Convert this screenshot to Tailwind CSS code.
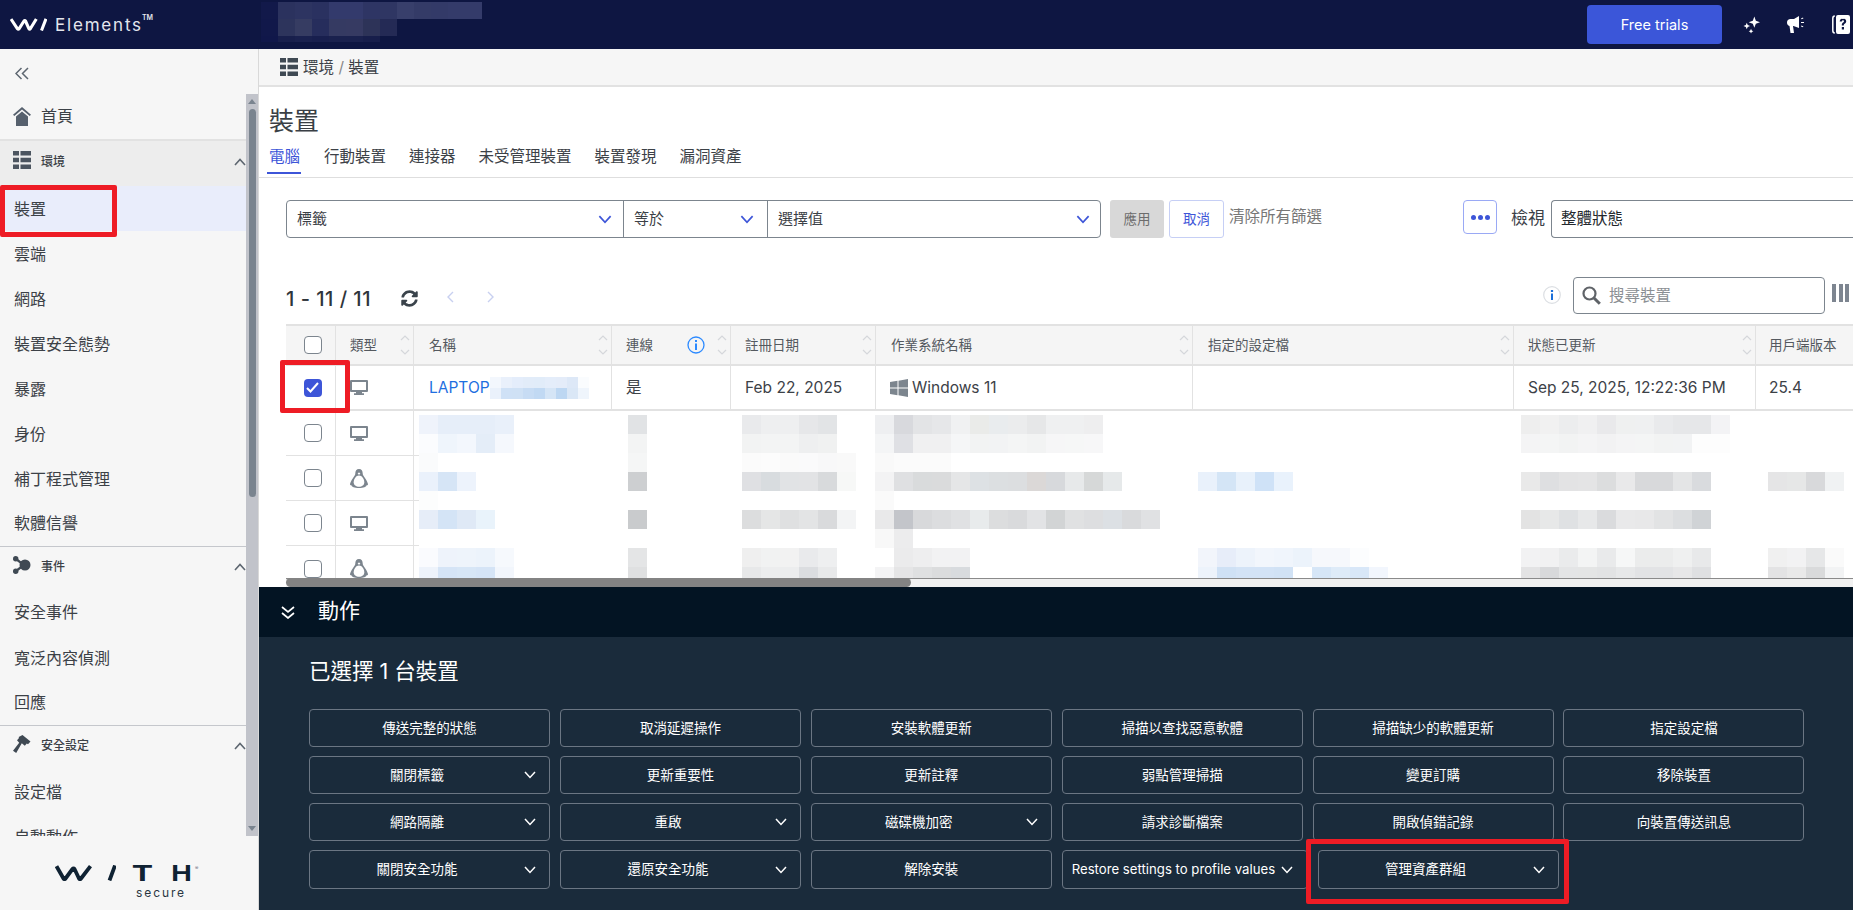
<!DOCTYPE html>
<html lang="zh-Hant">
<head>
<meta charset="utf-8" />
<title>WithSecure Elements - 裝置</title>
<script src="https://cdn.jsdelivr.net/npm/@tailwindcss/browser@4"></script>
</head>
<body class="font-[Inter,'Noto_Sans_CJK_TC',sans-serif] text-[#3c4147] bg-white overflow-hidden">

<!-- icon sprites -->
<svg class="hidden">
  <symbol id="i-list" viewBox="0 0 18 18"><path fill="currentColor" d="M0 0h6v4.500H0zM7.500 0H18v4.500H7.500zM0 6.700h6v4.500H0zM7.500 6.700H18v4.500H7.500zM0 13.400h6v4.500H0zM7.500 13.400H18v4.500H7.500z"/></symbol>
  <symbol id="i-sort" viewBox="0 0 10 20"><path fill="none" stroke="#d5d7db" stroke-width="1.200" d="M1 5l4-4 4 4M1 15l4 4 4-4"/></symbol>
  <symbol id="i-pc" viewBox="0 0 18 15"><path fill="currentColor" fill-rule="evenodd" d="M1 0h16a1 1 0 0 1 1 1v10a1 1 0 0 1-1 1H1a1 1 0 0 1-1-1V1a1 1 0 0 1 1-1zm1 2v8h14V2zM6 12h6v1.200h2V15H4v-1.800h2z"/></symbol>
  <symbol id="i-tux" viewBox="0 0 18 19"><path fill="currentColor" d="M9 0c2.600 0 3.700 2 3.700 4.400 0 1.700 1.200 2.900 2.600 5 1.300 2 2.700 4.400 2.700 5.900 0 .8-.7 1.100-1.300.7-.2 1.800-3.200 3-7.700 3s-7.500-1.200-7.700-3c-.6.4-1.300.1-1.300-.7 0-1.500 1.400-3.900 2.700-5.900 1.400-2.100 2.600-3.300 2.600-5C5.300 2 6.400 0 9 0z"/><path fill="#fff" d="M9 6.500c3 0 5.300 3.500 5.300 6.700 0 2.800-2.300 4.500-5.300 4.500s-5.300-1.700-5.300-4.500C3.700 10 6 6.500 9 6.500z"/><path fill="#fff" d="M7.600 4.200 9 6l1.400-1.800-1.400-.6z"/></symbol>
  <symbol id="i-chev" viewBox="0 0 12 8"><path fill="none" stroke="currentColor" stroke-width="1.500" d="M1 1l5 5.500L11 1"/></symbol>
  <symbol id="i-up" viewBox="0 0 12 8"><path fill="none" stroke="currentColor" stroke-width="1.600" d="M1 7l5-5.500L11 7"/></symbol>
</svg>

<div class="flex flex-col w-[1853px] h-[910px]">

  <!-- top bar -->
  <header class="flex items-center h-[49px] shrink-0 bg-[#0e1642] text-white">
    <div class="w-[261px] flex items-center pl-[10px] gap-[8px]">
      <svg class="w-[37px] h-[13px]" viewBox="0 0 37 13"><path fill="none" stroke="#fff" stroke-width="3.100" stroke-linejoin="round" d="M1 1l6.500 9.800q.8 1 1.500 0L14 3q.8-1 1.500 0l3.500 7.800q.6 1 1.300 0L26.300 1M36 .8L31.500 12.500"/></svg>
      <span class="text-[17px] leading-[20px] tracking-[1.800px] text-[#e4e6ee]">Elements<sup class="text-[7px] tracking-normal align-[7px] -ml-[1px] font-semibold">TM</sup></span>
    </div>
    <div id="head-blur" class="grid grid-cols-[repeat(13,17px)] auto-rows-[17px] h-[40px] overflow-hidden self-start mt-[2px]"></div>
    <a class="ml-auto w-[135px] h-[39px] flex items-center justify-center rounded-[4px] bg-[#3b56d9] text-[14.500px]">Free trials</a>
    <svg class="w-[17px] h-[18px] ml-[21px]" viewBox="0 0 18 18"><path fill="#fff" d="M12 0l1.600 4.400L18 6l-4.400 1.600L12 12l-1.600-4.400L6 6l4.400-1.600zM4 6.500l1 2.500 2.500 1-2.500 1-1 2.500-1-2.500L.5 10l2.500-1zM8.500 13l.8 1.800 1.700.7-1.700.8-.8 1.700-.8-1.700-1.700-.8 1.700-.7z"/></svg>
    <svg class="w-[18px] h-[19px] ml-[27px]" viewBox="0 0 18 19"><path fill="#fff" d="M12 1v12L6.500 11H6l1 7H3.500L2.500 11C.9 10.500 0 9.300 0 7.500 0 5.500 1.400 4 3.500 4H7zM14 3.400l2-.8.4.9-2 .8zM14 7h3v1h-3zM14 11.500l.4-.9 2 .8-.4.9z"/></svg>
    <svg class="w-[18px] h-[19px] ml-[27px] mr-[3px]" viewBox="0 0 18 19"><path fill="none" stroke="#fff" stroke-width="1.500" d="M2.800 1Q.8 1 .8 3.500v12q0 2.500 2 2.500"/><path fill="#fff" fill-rule="evenodd" d="M6 0h10a2 2 0 0 1 2 2v15a2 2 0 0 1-2 2H6a2 2 0 0 1-2-2V2a2 2 0 0 1 2-2zm5 3.500C9.100 3.500 7.800 4.600 7.700 6.400h2.100c.1-.7.500-1.100 1.100-1.100.6 0 1.100.4 1.100 1 0 .5-.3.8-.9 1.300-1 .7-1.300 1.400-1.300 2.800h2c0-.8.200-1.200.9-1.700.9-.6 1.500-1.400 1.500-2.500 0-1.800-1.400-2.700-3.300-2.700zM9.800 12v2.400H12V12z"/></svg>
  </header>

  <div class="flex flex-1 min-h-0">

    <!-- sidebar -->
    <aside class="w-[259px] shrink-0 flex flex-col bg-[#f6f6f6] border-r border-[#d9d9d9] relative">
      <div class="h-[45px] shrink-0 flex items-center pl-[15px] pt-[4px] text-[#5d6670]">
        <svg class="w-[14px] h-[13px]" viewBox="0 0 14 13"><path fill="none" stroke="currentColor" stroke-width="1.500" d="M6.500 1L1 6.500 6.500 12M13 1L7.500 6.500 13 12"/></svg>
      </div>
      <div class="flex h-[742px] shrink-0">
        <nav class="w-[246px] overflow-hidden text-[16px]">
          <div class="h-[47px] flex items-center pl-[13px] gap-[10px] border-b-2 border-[#e2e2e2]">
            <svg class="w-[18px] h-[19px] text-[#56606d]" viewBox="0 0 18 19"><path fill="currentColor" d="M9 0l9 7.800-1.300 1.300L9 2.500 1.300 9.100 0 7.800zM9 4.500l6 5V19H3V9.500z"/></svg>
            <span class="pb-[2px]">首頁</span>
          </div>
          <div class="h-[45px] flex items-start pt-[10px] pl-[13px] gap-[10px] bg-[#ededed] text-[12px] font-medium">
            <svg class="w-[18px] h-[18px] text-[#4c5560]"><use href="#i-list"/></svg>
            <span class="flex-1 leading-[22px]">環境</span>
            <svg class="w-[12px] h-[8px] mt-[7px] text-[#5d6670]"><use href="#i-up"/></svg>
          </div>
          <div class="h-[45px] flex items-center pl-[14px] bg-[#e9edfb]">裝置</div>
          <div class="h-[45px] flex items-center pl-[14px]">雲端</div>
          <div class="h-[45px] flex items-center pl-[14px]">網路</div>
          <div class="h-[45px] flex items-center pl-[14px]">裝置安全態勢</div>
          <div class="h-[45px] flex items-center pl-[14px]">暴露</div>
          <div class="h-[45px] flex items-center pl-[14px]">身份</div>
          <div class="h-[45px] flex items-center pl-[14px]">補丁程式管理</div>
          <div class="h-[45px] flex items-center pl-[14px] pb-[1px]">軟體信譽</div>
          <div class="h-[44px] flex items-start pt-[9px] pl-[13px] gap-[10px] border-t border-[#c5c7cc] text-[12px] font-medium">
            <svg class="w-[18px] h-[18px] text-[#3f4953]" viewBox="0 0 18 18"><path fill="none" stroke="currentColor" stroke-width="2.200" d="M3 3l8 6-8 6"/><circle cx="12" cy="9" r="5.500" fill="currentColor"/><circle cx="2.700" cy="2.700" r="2.700" fill="currentColor"/><circle cx="2.700" cy="15.300" r="2.700" fill="currentColor"/></svg>
            <span class="flex-1 leading-[22px]">事件</span>
            <svg class="w-[12px] h-[8px] mt-[7px] text-[#5d6670]"><use href="#i-up"/></svg>
          </div>
          <div class="h-[45px] flex items-center pl-[14px] pb-[1px]">安全事件</div>
          <div class="h-[45px] flex items-center pl-[14px]">寬泛內容偵測</div>
          <div class="h-[45px] flex items-center pl-[14px] pb-[1px]">回應</div>
          <div class="h-[44px] flex items-start pt-[9px] pl-[13px] gap-[10px] border-t border-[#c5c7cc] text-[12px] font-medium">
            <svg class="w-[18px] h-[18px] text-[#3f4953]" viewBox="0 0 18 18"><path fill="currentColor" d="M9.500 0l8 6.500-2.500 2.700-1.200-.8-2 2.300-3-2.500L3.200 18 0 15.800l6.200-8L4 5.300l2-2.200L5.700 2z"/></svg>
            <span class="flex-1 leading-[22px]">安全設定</span>
            <svg class="w-[12px] h-[8px] mt-[7px] text-[#5d6670]"><use href="#i-up"/></svg>
          </div>
          <div class="h-[45px] flex items-center pl-[14px]">設定檔</div>
          <div class="h-[45px] flex items-center pl-[14px]">自動動作</div>
        </nav>
        <!-- scrollbar -->
        <div class="w-[12px] bg-[#c1c3ca] flex flex-col items-center">
          <div class="mt-[5px] w-0 h-0 border-x-[4px] border-x-transparent border-b-[5px] border-b-[#7a848f]"></div>
          <div class="mt-[5px] w-[7px] h-[388px] rounded-[4px] bg-[#7a848f]"></div>
          <div class="mt-auto mb-[5px] w-0 h-0 border-x-[4px] border-x-transparent border-t-[5px] border-t-[#7a848f]"></div>
        </div>
      </div>
      <!-- WithSecure logo -->
      <div class="flex-1 pl-[55px] pt-[29px] text-[#0f2233]">
        <div class="flex items-start h-[16px] w-[148px]">
          <svg class="w-[61px] h-[16px] shrink-0" viewBox="0 0 61 16"><path fill="none" stroke="currentColor" stroke-width="3.800" stroke-linejoin="round" d="M1.500 1.200l7 12.300q1 1.300 2 0L17.500 4q1-1.300 2 0l4.500 9.500q1 1.300 2 0L35.500 1.200M60 .5L54.500 15.500"/></svg>
          <span class="ml-[16px] w-[21px] text-center text-[22px] leading-[16px] font-bold scale-x-[1.450] inline-block">T</span>
          <span class="ml-[18px] w-[21px] text-center text-[22px] leading-[16px] font-bold scale-x-[1.250] inline-block">H</span>
          <span class="ml-[3px] text-[5px] leading-[6px] text-[#667]">®</span>
        </div>
        <div class="pl-[81px] mt-[5px] text-[12px] leading-[13px] tracking-[1.900px] text-[#2a3642]">secure</div>
      </div>
      <!-- red annotation -->
      <div class="absolute left-0 top-[136px] w-[117px] h-[52px] border-[5px] border-[#ee1c25] rounded-[2px]"></div>
    </aside>

    <!-- main -->
    <main class="flex-1 min-w-0 flex flex-col">
      <div class="h-[38px] shrink-0 flex items-center pl-[21px] gap-[5px] bg-[#f6f6f6] border-b-2 border-[#e2e2e2] text-[15.500px]">
        <svg class="w-[18px] h-[18px] text-[#3f4953]"><use href="#i-list"/></svg>
        <span class="pt-[1px]">環境 <span class="text-[#888]">/</span> 裝置</span>
      </div>

      <div class="h-[91px] shrink-0 border-b border-[#dedede] pl-[10px] flex flex-col">
        <h1 class="text-[25px] leading-[34px] mt-[17px] text-[#3a3f45]">裝置</h1>
        <div class="flex gap-[23px] text-[15.500px] leading-[22px] mt-[3px] -ml-[1px]">
          <span class="relative h-[37px] pt-[5px] px-[1px] text-[#3d55d8]">電腦<i class="absolute left-[-1px] right-0 bottom-[4px] h-[2px] bg-[#3d55d8]"></i></span>
          <span class="pt-[5px]">行動裝置</span>
          <span class="pt-[5px]">連接器</span>
          <span class="pt-[5px]">未受管理裝置</span>
          <span class="pt-[5px]">裝置發現</span>
          <span class="pt-[5px]">漏洞資產</span>
        </div>
      </div>

      <!-- filters -->
      <div class="flex items-start h-[38px] mt-[22px] shrink-0 pl-[27px] text-[15px]">
        <div class="flex w-[815px] h-[38px] border border-[#7c858e] rounded-[4px]">
          <div class="w-[337px] flex items-center justify-between pl-[10px] pr-[11px] border-r border-[#7c858e]">標籤<svg class="w-[14px] h-[9px] text-[#3d55d8]"><use href="#i-chev"/></svg></div>
          <div class="w-[144px] flex items-center justify-between pl-[10px] pr-[13px] border-r border-[#7c858e]">等於<svg class="w-[14px] h-[9px] text-[#3d55d8]"><use href="#i-chev"/></svg></div>
          <div class="flex-1 flex items-center justify-between pl-[10px] pr-[10px]">選擇值<svg class="w-[14px] h-[9px] text-[#3d55d8]"><use href="#i-chev"/></svg></div>
        </div>
        <div class="ml-[9px] w-[54px] h-[38px] flex items-center justify-center bg-[#d8d8d8] rounded-[3px] text-[13.500px] text-[#6c6c6c]">應用</div>
        <div class="ml-[5px] w-[55px] h-[38px] flex items-center justify-center border border-[#c6cff5] rounded-[3px] text-[13.500px] text-[#3d55d8]">取消</div>
        <div class="ml-[5px] w-[96px] text-[15.500px] leading-[33px] text-[#777] whitespace-nowrap">清除所有篩選</div>
        <div class="ml-[138px] w-[34px] h-[34px] flex items-center justify-center gap-[2px] border border-[#9aa9f5] rounded-[4px]">
          <i class="w-[5px] h-[5px] rounded-full bg-[#3d55d8]"></i><i class="w-[5px] h-[5px] rounded-full bg-[#3d55d8]"></i><i class="w-[5px] h-[5px] rounded-full bg-[#3d55d8]"></i>
        </div>
        <div class="ml-[14px] text-[17px] leading-[36px]">檢視</div>
        <div class="ml-[6px] flex-1 h-[38px] flex items-center pl-[9px] border border-[#7c858e] border-r-0 rounded-l-[4px] text-[15.500px] text-[#23282d]">整體狀態</div>
      </div>

      <!-- pager + search -->
      <div class="h-[37px] mt-[39px] shrink-0 flex items-center pl-[27px]">
        <span class="text-[20px] leading-[24px] tracking-[.5px] font-medium text-[#2f353b] w-[115px] pt-[6px]">1 - 11 / 11</span>
        <svg class="w-[17px] h-[17px] mt-[5px] text-[#3a434b]" viewBox="0 0 512 512"><path fill="currentColor" d="M370.72 133.28C339.458 104.008 298.888 87.962 255.848 88c-77.458.068-144.328 53.178-162.791 126.85-1.344 5.363-6.122 9.15-11.651 9.15H24.103c-7.498 0-13.194-6.807-11.807-14.176C33.933 94.924 134.813 8 256 8c66.448 0 126.791 26.136 171.315 68.685L463.03 40.97C478.149 25.851 504 36.559 504 57.941V192c0 13.255-10.745 24-24 24H345.941c-21.382 0-32.090-25.851-16.971-40.971l41.750-41.749zM32 296h134.059c21.382 0 32.090 25.851 16.971 40.971l-41.750 41.750c31.262 29.273 71.835 45.319 114.876 45.280 77.418-.070 144.315-53.144 162.787-126.849 1.344-5.363 6.122-9.150 11.651-9.150h57.304c7.498 0 13.194 6.807 11.807 14.176C478.067 417.076 377.187 504 256 504c-66.448 0-126.791-26.136-171.315-68.685L48.970 471.030C33.851 486.149 8 475.441 8 454.059V320c0-13.255 10.745-24 24-24z"/></svg>
        <svg class="w-[7px] h-[12px] ml-[29px] mt-[3px] text-[#c8d0f0]" viewBox="0 0 7 12"><path fill="none" stroke="currentColor" stroke-width="1.400" d="M6 1L1 6l5 5"/></svg>
        <svg class="w-[7px] h-[12px] ml-[33px] mt-[3px] text-[#c8d0f0]" viewBox="0 0 7 12"><path fill="none" stroke="currentColor" stroke-width="1.400" d="M1 1l5 5-5 5"/></svg>
        <svg class="w-[18px] h-[18px] ml-auto mr-[12px] -mt-[2px]" viewBox="0 0 18 18"><circle cx="9" cy="9" r="8.300" fill="#fff" stroke="#dcdfe3" stroke-width="1.200"/><path fill="#1b6fd9" d="M7.900 4h2.200v2H7.900zM8 7.500h2V14H8z"/></svg>
        <div class="w-[252px] h-[37px] flex items-center pl-[8px] gap-[8px] border border-[#7c858e] rounded-[4px] text-[15.500px] text-[#8b8f94]">
          <svg class="w-[19px] h-[19px]" viewBox="0 0 19 19"><circle cx="7.500" cy="7.500" r="6" fill="none" stroke="#5f6368" stroke-width="2.200"/><path stroke="#5f6368" stroke-width="3" d="M12 12l5.800 5.800"/></svg>
          <span class="pt-[1px]">搜尋裝置</span>
        </div>
        <div class="ml-[7px] mr-[4px] flex gap-[2.500px] -mt-[6px]"><i class="w-[4px] h-[18px] bg-[#7d8590]"></i><i class="w-[4px] h-[18px] bg-[#7d8590]"></i><i class="w-[4px] h-[18px] bg-[#7d8590]"></i></div>
      </div>

      <!-- device table -->
      <div class="relative mt-[10px] ml-[27px] h-[254px] shrink-0">
        <div class="h-full overflow-hidden text-[15.500px]">
          <div class="w-[1590px] grid grid-cols-[50px_78px_198px_119px_145px_317px_321px_242px_120px] h-[42px] bg-[#f5f5f5] border-y-2 border-[#e2e2e2] text-[13.500px] text-[#54595f]">
            <div class="flex items-center justify-center pl-[4px] border-r border-[#e2e2e2]"><i class="w-[18px] h-[18px] border border-[#7c858e] rounded-[4px] bg-white"></i></div>
            <div class="flex items-center justify-between pl-[14px] pr-[3px] border-r border-[#e2e2e2]">類型<svg class="w-[10px] h-[20px]"><use href="#i-sort"/></svg></div>
            <div class="flex items-center justify-between pl-[15px] pr-[3px] border-r border-[#e2e2e2]">名稱<svg class="w-[10px] h-[20px]"><use href="#i-sort"/></svg></div>
            <div class="flex items-center pl-[14px] pr-[3px] border-r border-[#e2e2e2]">連線
              <svg class="w-[18px] h-[18px] ml-auto mr-[12px]" viewBox="0 0 18 18"><circle cx="9" cy="9" r="8" fill="none" stroke="#2c8aff" stroke-width="1.300"/><path fill="#2c8aff" d="M8 4h2v2H8zM8 7.500h2V14H8z"/></svg>
              <svg class="w-[10px] h-[20px]"><use href="#i-sort"/></svg></div>
            <div class="flex items-center justify-between pl-[14px] pr-[3px] border-r border-[#e2e2e2]">註冊日期<svg class="w-[10px] h-[20px]"><use href="#i-sort"/></svg></div>
            <div class="flex items-center justify-between pl-[15px] pr-[3px] border-r border-[#e2e2e2]">作業系統名稱<svg class="w-[10px] h-[20px]"><use href="#i-sort"/></svg></div>
            <div class="flex items-center justify-between pl-[15px] pr-[3px] border-r border-[#e2e2e2]">指定的設定檔<svg class="w-[10px] h-[20px]"><use href="#i-sort"/></svg></div>
            <div class="flex items-center justify-between pl-[14px] pr-[3px] border-r border-[#e2e2e2]">狀態已更新<svg class="w-[10px] h-[20px]"><use href="#i-sort"/></svg></div>
            <div class="flex items-center pl-[13px]">用戶端版本</div>
          </div>

          <div class="w-[1590px] grid grid-cols-[50px_78px_198px_119px_145px_317px_321px_242px_120px] h-[45px] border-b-2 border-[#e2e2e2]">
            <div class="flex items-center justify-center pl-[4px] border-r border-[#e2e2e2]"><i class="w-[18px] h-[18px] rounded-[4px] bg-[#3d55d8] flex items-center justify-center"><svg class="w-[13px] h-[11px]" viewBox="0 0 13 11"><path fill="none" stroke="#fff" stroke-width="2" d="M1 6l3.500 3.500L12 1"/></svg></i></div>
            <div class="flex items-center pl-[14px] border-r border-[#e2e2e2] text-[#7c858e]"><svg class="w-[18px] h-[15px]"><use href="#i-pc"/></svg></div>
            <div class="flex items-center pl-[15px] border-r border-[#e2e2e2] text-[#1f6fe0]">LAPTOP<span id="name-blur" class="grid grid-cols-[repeat(9,11px)] auto-rows-[11px]"></span></div>
            <div class="flex items-center pl-[14px] border-r border-[#e2e2e2]">是</div>
            <div class="flex items-center pl-[14px] border-r border-[#e2e2e2]">Feb 22, 2025</div>
            <div class="flex items-center pl-[14px] gap-[4px] border-r border-[#e2e2e2]"><svg class="w-[18px] h-[18px] text-[#7c858e]" viewBox="0 0 18 18"><path fill="currentColor" d="M0 3l7.500-1.200v6.700H0zM8.500 1.700L18 0v8.500H8.500zM0 9.500h7.500v6.700L0 15zM8.500 9.500H18V18l-9.500-1.700z"/></svg>Windows 11</div>
            <div class="border-r border-[#e2e2e2]"></div>
            <div class="flex items-center pl-[14px] border-r border-[#e2e2e2]">Sep 25, 2025, 12:22:36 PM</div>
            <div class="flex items-center pl-[13px]">25.4</div>
          </div>

          <div class="w-[140px] grid grid-cols-[50px_78px] h-[45px] border-b border-[#e2e2e2]"><div class="flex items-center justify-center pl-[4px] border-r border-[#e2e2e2]"><i class="w-[18px] h-[18px] border border-[#7c858e] rounded-[4px]"></i></div><div class="flex items-center pl-[14px] border-r border-[#e2e2e2] text-[#7c858e]"><svg class="w-[18px] h-[15px]"><use href="#i-pc"/></svg></div></div>
          <div class="w-[140px] grid grid-cols-[50px_78px] h-[45px] border-b border-[#e2e2e2]"><div class="flex items-center justify-center pl-[4px] border-r border-[#e2e2e2]"><i class="w-[18px] h-[18px] border border-[#7c858e] rounded-[4px]"></i></div><div class="flex items-center pl-[14px] border-r border-[#e2e2e2] text-[#7c858e]"><svg class="w-[18px] h-[19px]"><use href="#i-tux"/></svg></div></div>
          <div class="w-[140px] grid grid-cols-[50px_78px] h-[45px] border-b border-[#e2e2e2]"><div class="flex items-center justify-center pl-[4px] border-r border-[#e2e2e2]"><i class="w-[18px] h-[18px] border border-[#7c858e] rounded-[4px]"></i></div><div class="flex items-center pl-[14px] border-r border-[#e2e2e2] text-[#7c858e]"><svg class="w-[18px] h-[15px]"><use href="#i-pc"/></svg></div></div>
          <div class="w-[140px] grid grid-cols-[50px_78px] h-[45px]"><div class="flex items-center justify-center pl-[4px] border-r border-[#e2e2e2]"><i class="w-[18px] h-[18px] border border-[#7c858e] rounded-[4px]"></i></div><div class="flex items-center pl-[14px] border-r border-[#e2e2e2] text-[#7c858e]"><svg class="w-[18px] h-[19px]"><use href="#i-tux"/></svg></div></div>
        </div>

        <!-- blurred rows lie over the table -->
        <div id="row-blur" class="absolute left-[133px] top-[91px] w-[1434px] h-[163px] bg-white overflow-hidden grid grid-cols-[repeat(76,19px)] auto-rows-[19px]"></div>
        <!-- red annotation -->
        <div class="absolute left-[-6px] top-[36px] w-[70px] h-[53px] border-[5px] border-[#ee1c25] rounded-[2px]"></div>
      </div>

      <!-- horizontal scrollbar -->
      <div class="h-[9px] shrink-0 ml-[27px] bg-[#f1f1f1] border-t border-[#8a8a8a] relative">
        <div class="absolute left-0 -top-[1px] w-[625px] h-[9px] rounded-[5px] bg-[#838383]"></div>
      </div>

      <!-- actions -->
      <div class="h-[50px] shrink-0 flex items-center pl-[22px] gap-[23px] bg-[#031423] text-white text-[21px]">
        <svg class="w-[14px] h-[13px]" viewBox="0 0 14 13"><path fill="none" stroke="#fff" stroke-width="1.700" d="M1 1l6 5 6-5M1 7l6 5 6-5"/></svg>
        <span class="pb-[2px]">動作</span>
      </div>
      <div class="flex-1 relative bg-[#1a2b3b] text-white pl-[50px] pt-[20px]">
        <h2 class="text-[21.500px] leading-[28px] mb-[24px]">已選擇 1 台裝置</h2>
        <div class="flex flex-wrap gap-x-[9.900px] gap-y-[9px] w-[1510px] text-[13.500px]">
          <div class="w-[241px] h-[38px] flex items-center justify-center border border-[#6b7683] rounded-[4px]">傳送完整的狀態</div>
          <div class="w-[241px] h-[38px] flex items-center justify-center border border-[#6b7683] rounded-[4px]">取消延遲操作</div>
          <div class="w-[241px] h-[38px] flex items-center justify-center border border-[#6b7683] rounded-[4px]">安裝軟體更新</div>
          <div class="w-[241px] h-[38px] flex items-center justify-center border border-[#6b7683] rounded-[4px]">掃描以查找惡意軟體</div>
          <div class="w-[241px] h-[38px] flex items-center justify-center border border-[#6b7683] rounded-[4px]">掃描缺少的軟體更新</div>
          <div class="w-[241px] h-[38px] flex items-center justify-center border border-[#6b7683] rounded-[4px]">指定設定檔</div>

          <div class="w-[241px] h-[38px] flex items-center pr-[13px] border border-[#6b7683] rounded-[4px]"><span class="flex-1 text-center">關閉標籤</span><svg class="w-[12px] h-[8px]"><use href="#i-chev"/></svg></div>
          <div class="w-[241px] h-[38px] flex items-center justify-center border border-[#6b7683] rounded-[4px]">更新重要性</div>
          <div class="w-[241px] h-[38px] flex items-center justify-center border border-[#6b7683] rounded-[4px]">更新註釋</div>
          <div class="w-[241px] h-[38px] flex items-center justify-center border border-[#6b7683] rounded-[4px]">弱點管理掃描</div>
          <div class="w-[241px] h-[38px] flex items-center justify-center border border-[#6b7683] rounded-[4px]">變更訂購</div>
          <div class="w-[241px] h-[38px] flex items-center justify-center border border-[#6b7683] rounded-[4px]">移除裝置</div>

          <div class="w-[241px] h-[38px] flex items-center pr-[13px] border border-[#6b7683] rounded-[4px]"><span class="flex-1 text-center">網路隔離</span><svg class="w-[12px] h-[8px]"><use href="#i-chev"/></svg></div>
          <div class="w-[241px] h-[38px] flex items-center pr-[13px] border border-[#6b7683] rounded-[4px]"><span class="flex-1 text-center">重啟</span><svg class="w-[12px] h-[8px]"><use href="#i-chev"/></svg></div>
          <div class="w-[241px] h-[38px] flex items-center pr-[13px] border border-[#6b7683] rounded-[4px]"><span class="flex-1 text-center">磁碟機加密</span><svg class="w-[12px] h-[8px]"><use href="#i-chev"/></svg></div>
          <div class="w-[241px] h-[38px] flex items-center justify-center border border-[#6b7683] rounded-[4px]">請求診斷檔案</div>
          <div class="w-[241px] h-[38px] flex items-center justify-center border border-[#6b7683] rounded-[4px]">開啟偵錯記錄</div>
          <div class="w-[241px] h-[38px] flex items-center justify-center border border-[#6b7683] rounded-[4px]">向裝置傳送訊息</div>

          <div class="w-[241px] h-[39px] flex items-center pr-[13px] border border-[#6b7683] rounded-[4px]"><span class="flex-1 text-center">關閉安全功能</span><svg class="w-[12px] h-[8px]"><use href="#i-chev"/></svg></div>
          <div class="w-[241px] h-[39px] flex items-center pr-[13px] border border-[#6b7683] rounded-[4px]"><span class="flex-1 text-center">還原安全功能</span><svg class="w-[12px] h-[8px]"><use href="#i-chev"/></svg></div>
          <div class="w-[241px] h-[39px] flex items-center justify-center border border-[#6b7683] rounded-[4px]">解除安裝</div>
          <div class="w-[246px] h-[39px] flex items-center pl-[9px] border border-[#6b7683] rounded-[4px] whitespace-nowrap text-[13.200px]">Restore settings to profile values<svg class="w-[12px] h-[8px] ml-[6px]"><use href="#i-chev"/></svg></div>
          <div class="w-[241px] h-[39px] flex items-center pr-[13px] border border-[#6b7683] rounded-[4px]"><span class="flex-1 text-center">管理資產群組</span><svg class="w-[12px] h-[8px]"><use href="#i-chev"/></svg></div>
        </div>
        <!-- red annotation -->
        <div class="absolute left-[1047px] top-[202px] w-[263px] h-[65px] border-[5px] border-[#ee1c25] rounded-[2px]"></div>
      </div>
    </main>
  </div>
</div>

<script>
  // mosaic cells: [row, first column, colours]
  const headCells = [
    [0, 0, ["#12194a","#2b325e","#2d3461","#2a3160","#333a6c","#333a6c","#2e3564","#2f3663","#383f6b","#343b67","#333a68","#343b6a","#343b6a"]],
    [1, 0, ["#11184a","#2d345c","#363c62","#262d5c","#353a62","#363a62","#2d3358","#242a55"]],
    [2, 0, ["#10174a","#181f4c","#1a214f","#181f4e","#1a214e","#1a214e","#171e4b"]],
  ];
  const rowCells = [
    [0, 0, ["#eff3fb","#e6eef9","#e6eef9","#e6eef9","#e9f0fa"]], [0, 11, ["#e1e3e5"]], [0, 17, ["#e9eaec","#eeeff0","#eeeff0","#e6e7e9","#e2e4e6"]],
    [0, 24, ["#eeeff1","#d8d9dd","#e3e4e6","#e6e7e9","#f0f1f2","#eaebe9","#e9ecee","#ebeced","#e6e7e8","#eff0f1","#eff0f1","#eeeeef"]],
    [0, 58, ["#eeeeee","#f1f1f1","#ecedee","#f0f0f1","#e9e9eb","#eff0f0","#eff0f1","#e9eaec","#e6e7e9","#e6e7e9","#f3f3f5"]],
    [1, 0, ["#fbfcfe","#eff5fc","#f3f7fd","#e4edf8","#f5f8fd"]], [1, 11, ["#f3f4f4"]], [1, 17, ["#f2f3f3","#f3f4f4","#f3f4f4","#eeeff0","#f0f1f1"]],
    [1, 24, ["#f4f5f6","#dfe0e4","#f0f0f1","#f0f0f1","#f5f6f7","#f2f3f3","#f2f3f4","#f4f5f5","#f2f3f3","#f6f6f7","#f6f7f7","#f7f7f8"]],
    [1, 58, ["#f4f4f5","#f4f5f5","#f2f3f3","#f4f4f5","#f2f2f3","#f4f4f5","#f4f5f5","#f2f3f3","#f2f3f4","#fdfdfd","#fdfdfd"]],
    [2, 0, ["#fafbfc"]], [2, 11, ["#f5f6f6"]], [2, 17, ["#fbfbfb","#fcfcfc","#fafafa","#fafafb","#f8f8f9","#f9f9f9"]], [2, 24, ["#f9f9f9","#fbfbfb","#fbfbfb","#fbfbfb"]],
    [3, 0, ["#eaf1fb","#d6e5f6","#edf3fc"]], [3, 11, ["#cdcfd1"]], [3, 17, ["#dfe0e3","#d8dcdf","#e1e3e5","#e2e3e5","#d8dadc","#f7f8f7"]],
    [3, 24, ["#f3f3f4","#dfe0e2","#d9dbdc","#dadbdc","#e5e6e7","#dde1e4","#dcdfe1","#dcdee0","#dbd8d7","#d7d9dc","#e7e9ea","#d6d8d8","#e6e9ea"]],
    [3, 41, ["#e9f1fb","#d4e5f6","#e8f1fb","#cfe2f7","#e9f2fc"]], [3, 58, ["#e9e9e9","#dedfe1","#e3e3e4","#e4e4e5","#dcddde","#e9e9ea","#d8d9db","#d8d9db","#e4e5e6","#d9dbde"]],
    [3, 71, ["#e5e5e6","#e6e7e7","#d8d9db","#f0f2f3"]],
    [4, 0, ["#fcfdfd"]], [4, 24, ["#fafafa"]],
    [5, 0, ["#e6edf8","#d4e4f6","#dfe9f6","#e9f3fb"]], [5, 11, ["#c9cbcd"]], [5, 17, ["#dcddde","#e5e6e6","#dfe0e1","#e3e4e5","#d9dadc","#f3f4f5"]],
    [5, 24, ["#e9e9ea","#c3c5ca","#d8d9db","#dcdddf","#e0e1e3","#e8ebec","#dcddde","#d9dadc","#e2e3e5","#d2d4d5","#e0e1e2","#dddee0","#dce0e4","#d9dadc","#e0e1e3"]],
    [5, 58, ["#e3e3e3","#e7e8e8","#dfe1e3","#e7e8e9","#dadbdd","#e9e9ea","#e8e8e9","#e2e3e4","#dcdee0","#d0d3d6"]],
    [6, 24, ["#f8f8f8","#ececed"]],
    [7, 0, ["#fafbfe","#eef3fb","#eef4fb","#ecf3fb","#f6f9fd"]], [7, 11, ["#e4e5e6"]], [7, 17, ["#efefef","#f1f2f2","#f2f2f2","#e9eaec","#eeeff0"]], [7, 25, ["#ebebec","#eeeeef","#f2f2f3","#f2f2f3"]],
    [7, 41, ["#f2f5fb","#e7edf9","#edf3fb","#f2f6fc","#f0f5fc","#ecf3fb","#f6f8fc","#f6f8fc","#fcfdfe"]], [7, 58, ["#f2f2f3","#f1f1f2","#eaebec","#f3f4f4","#e9eaeb","#f6f7f7","#ebecec","#ebecec","#eff0f0","#e8e9ea"]], [7, 71, ["#f0f0f0","#f2f2f3","#e6e7e8","#fafafa"]],
    [8, 0, ["#eef3fb","#d5e4f6","#d7e6f6","#d5e4f6","#f2f6fc"]], [8, 11, ["#dfe0e1"]], [8, 17, ["#e7e8e9","#ecedee","#ecedee","#dbdde0","#e8e9ea"]], [8, 24, ["#f4f4f5","#e5e5e6","#dfe0e1","#dbdcdd","#d8dbde"]],
    [8, 41, ["#edf3fb","#cfe1f5","#d3e3f6","#d3e3f6","#d1e2f5","#ffffff","#d6e6f7","#deebf8","#d8e7f8","#f2f6fd"]], [8, 58, ["#e3e3e4","#d8d9db","#e4e5e6","#e4e5e5","#e2e3e4","#e7e8e9","#e2e3e5","#e2e3e5","#e7e7e8","#dfe0e2"]], [8, 71, ["#e3e3e4","#e9e9e9","#d9dadb","#f2f3f4"]],
  ];
  const nameCells = [
    [0, 0, ["#f3f7fd","#e9f0fb","#e4edfb","#e2ecf9","#e1ecf9","#e4edfa","#e4ecf9","#dde8f7","#fafcfe"]],
    [1, 0, ["#eaf1fb","#cfe1f6","#cfe1f5","#c7dcf4","#c1d9f3","#d5e5f6","#bdd7f2","#dae7f6","#eff5fc"]],
  ];

  function paint(id, cells) {
    const box = document.getElementById(id);
    for (const [row, col, colours] of cells) {
      colours.forEach((c, i) => {
        const el = document.createElement("i");
        el.style.gridRow = row + 1;
        el.style.gridColumn = col + i + 1;
        el.style.backgroundColor = c;
        box.appendChild(el);
      });
    }
  }
  paint("head-blur", headCells);
  paint("row-blur", rowCells);
  paint("name-blur", nameCells);
</script>
</body>
</html>
